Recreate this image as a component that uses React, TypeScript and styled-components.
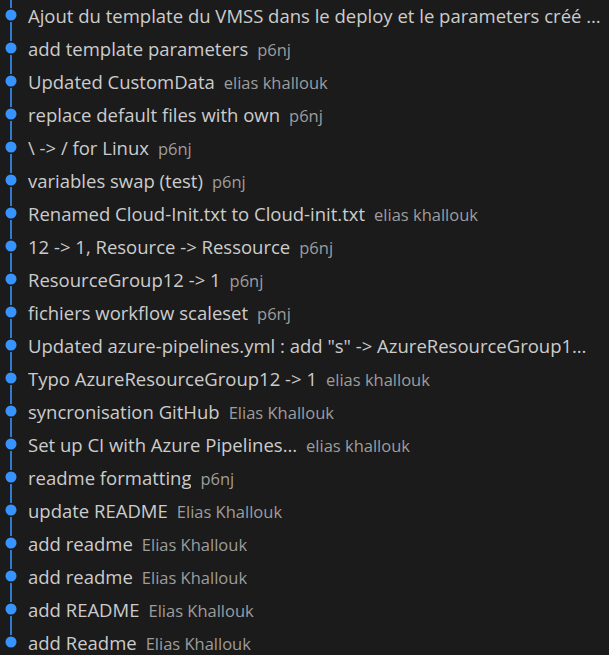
import React from "react";
import styled, { createGlobalStyle } from "styled-components";

const GlobalStyle = createGlobalStyle`
  html, body {
    margin: 0;
    padding: 0;
    background: #1b1b1b;
  }
  body {
    font-family: "Open Sans", "Noto Sans", sans-serif;
    overflow: hidden;
  }
`;

type Commit = { message: string; author: string };

const commits: Commit[] = [
  { message: "Ajout du template du VMSS dans le deploy et le parameters créé …", author: "" },
  { message: "add template parameters", author: "p6nj" },
  { message: "Updated CustomData", author: "elias khallouk" },
  { message: "replace default files with own", author: "p6nj" },
  { message: "\\ -> / for Linux", author: "p6nj" },
  { message: "variables swap (test)", author: "p6nj" },
  { message: "Renamed Cloud-Init.txt to Cloud-init.txt", author: "elias khallouk" },
  { message: "12 -> 1, Resource -> Ressource", author: "p6nj" },
  { message: "ResourceGroup12 -> 1", author: "p6nj" },
  { message: "fichiers workflow scaleset", author: "p6nj" },
  { message: "Updated azure-pipelines.yml : add \"s\" -> AzureResourceGroup1…", author: "" },
  { message: "Typo AzureResourceGroup12 -> 1", author: "elias khallouk" },
  { message: "syncronisation GitHub", author: "Elias Khallouk" },
  { message: "Set up CI with Azure Pipelines…", author: "elias khallouk" },
  { message: "readme formatting", author: "p6nj" },
  { message: "update README", author: "Elias Khallouk" },
  { message: "add readme", author: "Elias Khallouk" },
  { message: "add readme", author: "Elias Khallouk" },
  { message: "add README", author: "Elias Khallouk" },
  { message: "add Readme", author: "Elias Khallouk" },
];

const List = styled.div`
  display: flex;
  flex-direction: column;
  margin-top: -1px;
  width: 609px;
`;

const Row = styled.div`
  display: flex;
  align-items: center;
  height: 33px;
  overflow: hidden;
`;

const Graph = styled.svg`
  flex: 0 0 28px;
  width: 28px;
  height: 33px;
  display: block;
`;

const Label = styled.div`
  display: flex;
  align-items: baseline;
  gap: 9px;
  min-width: 0;
  white-space: nowrap;
  overflow: hidden;
`;

const Message = styled.span`
  color: #cccccc;
  font-size: 18.5px;
  overflow: hidden;
  text-overflow: ellipsis;
`;

const Author = styled.span`
  color: #9d9d9d;
  font-size: 16.5px;
`;

const BLUE = "#3794ff";

function GraphCell({ last }: { last: boolean }) {
  return (
    <Graph viewBox="0 0 28 33">
      <line x1="11" y1="0" x2="11" y2="9" stroke={BLUE} strokeWidth="1.6" />
      <circle cx="11" cy="16" r="5.5" fill={BLUE} />
      {!last && <line x1="11" y1="23" x2="11" y2="33" stroke={BLUE} strokeWidth="1.6" />}
    </Graph>
  );
}

export default function App() {
  return (
    <>
      <GlobalStyle />
      <List>
        {commits.map((c, i) => (
          <Row key={i}>
            <GraphCell last={i === commits.length - 1} />
            <Label>
              <Message>{c.message}</Message>
              {c.author && <Author>{c.author}</Author>}
            </Label>
          </Row>
        ))}
      </List>
    </>
  );
}
